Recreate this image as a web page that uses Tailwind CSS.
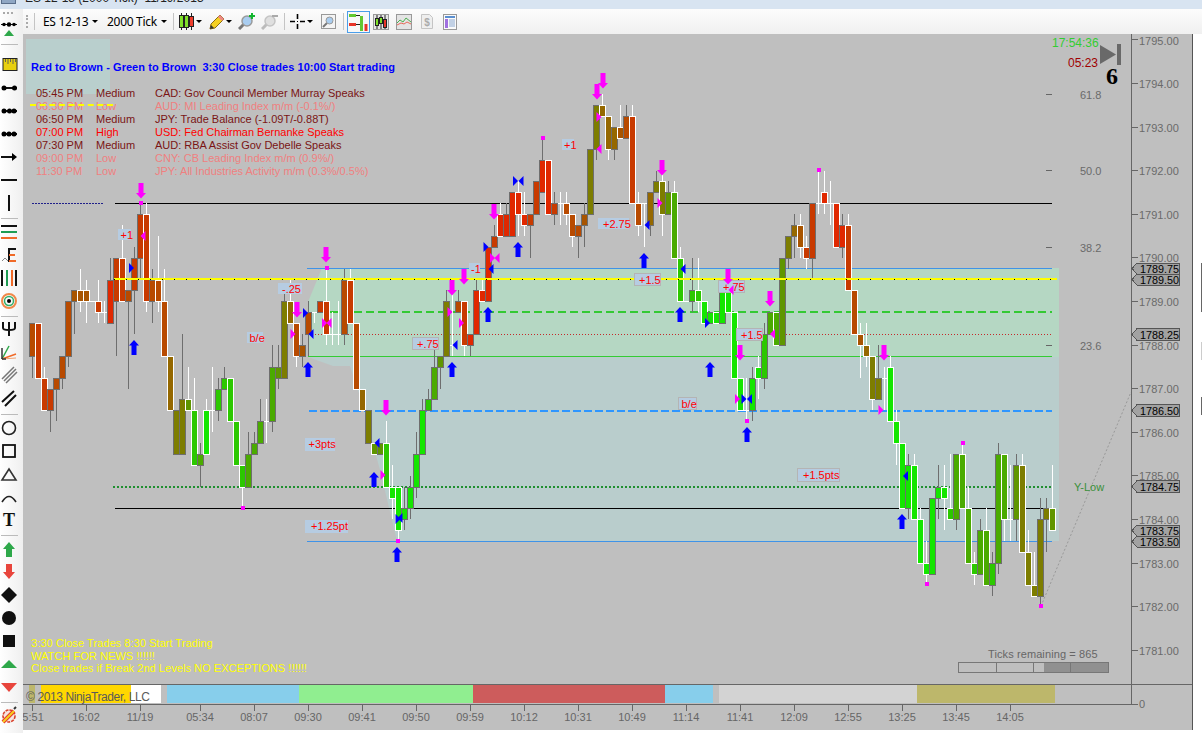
<!DOCTYPE html>
<html lang="en">
<head>
    <meta charset="UTF-8">
    <title>ES 12-13 (2000 Tick) 11/19/2013</title>
    <script src="https://cdn.jsdelivr.net/npm/@tailwindcss/browser@4"></script>
</head>
<body class="w-[1202px] h-[733px] overflow-hidden bg-white font-['Liberation_Sans',Arial,sans-serif]">
    <!-- title bar, only the bottom edge shows -->
    <div class="h-[9px] overflow-hidden bg-[#d8e4f1] flex items-end pl-[1px]">
        <div class="w-[15px] h-[6px] bg-[#8fa7c4] border border-[#5a6f8c] mb-[5px]"></div>
        <div class="ml-[9px] text-[12px] leading-[16px] mb-[3px] text-[#222] whitespace-pre">ES 12-13 (2000 Tick)  11/19/2013</div>
    </div>

    <div class="flex h-[724px]">
        <!-- left drawing tools -->
        <div class="w-[23px] h-full bg-linear-to-r from-[#ffffff] to-[#efefef] shrink-0">
            <svg width="23" height="724" viewBox="0 9 23 724">
                <g fill="#aaa"><rect x="3" y="12" width="2" height="2"/><rect x="7" y="12" width="2" height="2"/><rect x="11" y="12" width="2" height="2"/></g>
                <path d="M1 24.5h16" stroke="#111"/><circle cx="4" cy="24.5" r="1.8"/><circle cx="9" cy="24.5" r="2.2"/><circle cx="14" cy="24.5" r="1.8"/>
                <path d="M4 36l5-6 5 6z" fill="#2ea84a"/>
                <path d="M1 44.5h17" stroke="#bbb"/>
                <rect x="3" y="58.5" width="14" height="12" fill="#e8d010" stroke="#222"/>
                <path d="M5.5 59v3M8 59v5M10.5 59v3M13 59v5M15.5 59v3" stroke="#665"/>
                <path d="M2 88h15" stroke="#111" stroke-width="2"/><circle cx="4" cy="88" r="2.5"/><circle cx="14.5" cy="88" r="2.5"/>
                <path d="M2 111h15" stroke="#111" stroke-width="2"/><circle cx="4" cy="111" r="2.5"/><circle cx="9.5" cy="111" r="2.5"/><circle cx="14" cy="111" r="2.5"/>
                <path d="M2 134h15" stroke="#111" stroke-width="2"/><circle cx="4" cy="134" r="2.5"/><circle cx="9" cy="134" r="2.5"/><circle cx="14" cy="134" r="2.5"/>
                <path d="M1 157h14" stroke="#111" stroke-width="2"/><path d="M12 153l5 4-5 4z"/>
                <path d="M1 180h16" stroke="#111" stroke-width="2"/>
                <path d="M9 195v16" stroke="#111" stroke-width="2"/>
                <path d="M1 218.5h17" stroke="#bbb"/>
                <path d="M1 226h16" stroke="#111" stroke-width="2"/><path d="M1 232h16" stroke="#1f9d55" stroke-width="2"/><path d="M1 238h16" stroke="#f06a28" stroke-width="2"/>
                <path d="M2 261l3-3 3 3" fill="none" stroke="#888"/><path d="M9 248v14" stroke="#111" stroke-width="2"/><path d="M9 249h7M9 255h6M9 261h7" stroke="#f06a28" stroke-width="2"/><path d="M9 249h7" stroke="#111" stroke-width="2"/>
                <path d="M2 270v16M7 270v16M12 270v16M16 270v16" stroke="#111" stroke-width="2"/><path d="M7 270v16" stroke="#1f9d55" stroke-width="2"/><path d="M12 270v16" stroke="#f06a28" stroke-width="2"/>
                <circle cx="9" cy="301" r="7" fill="none" stroke="#f0894a" stroke-width="2"/><circle cx="9" cy="301" r="4.5" fill="none" stroke="#32b06c" stroke-width="1.5"/><circle cx="9" cy="301" r="2"/>
                <path d="M1 316.5h17" stroke="#bbb"/>
                <path d="M3 322v6q0 2 6 2t6-2v-6M9 322v14" fill="none" stroke="#111" stroke-width="2"/>
                <path d="M2 359L9 346" stroke="#2ea84a" stroke-width="1.5"/><path d="M2 359l14-5" stroke="#f06a28" stroke-width="1.5"/><path d="M2 359l14-1" stroke="#f0a070" stroke-width="1"/><path d="M2 359v-11" stroke="#333" stroke-width="1.5"/><path d="M2 359h4" stroke="#333" stroke-width="1.5"/>
                <path d="M2 379l12-12M4 381l12-12M6 383l11-11" stroke="#777" stroke-width="1.5"/>
                <path d="M2 402l12-11M5 406l11-11" stroke="#111" stroke-width="2"/>
                <path d="M1 414.5h17" stroke="#bbb"/>
                <circle cx="9" cy="428" r="6.5" fill="none" stroke="#222" stroke-width="1.6"/>
                <rect x="3" y="445" width="12" height="12" fill="none" stroke="#111" stroke-width="1.8"/>
                <path d="M2 480l7-11 7 11z" fill="none" stroke="#333" stroke-width="1.6"/>
                <path d="M2 502q7-11 14 0" fill="none" stroke="#222" stroke-width="1.6"/>
                <text x="9" y="526" text-anchor="middle" class="font-['Liberation_Serif',serif] font-bold text-[18px]" fill="#111">T</text>
                <path d="M1 535.5h17" stroke="#bbb"/>
                <path d="M9 542l6 7h-3v8H6v-8H3z" fill="#2ea84a"/>
                <path d="M6 564h6v8h3l-6 7-6-7h3z" fill="#e8453c"/>
                <path d="M9 587l8 8-8 8-8-8z" fill="#111"/>
                <circle cx="9" cy="618" r="7" fill="#111"/>
                <rect x="3" y="635" width="12" height="12" fill="#111"/>
                <path d="M1 668l8-8 8 8z" fill="#2ea84a"/>
                <path d="M1 683h16l-8 9z" fill="#e8453c"/>
                <path d="M1 702.5h17" stroke="#bbb"/>
                <circle cx="9" cy="716" r="6" fill="#f6e6e0" stroke="#d8412c" stroke-width="1.6" stroke-dasharray="3 1"/><path d="M3 722L14 711" stroke="#e8352a" stroke-width="4"/><path d="M3 722L14 711" stroke="#f5d020" stroke-width="2.200"/><path d="M14 709l2-2" stroke="#333" stroke-width="2"/>
            </svg>
        </div>

        <div class="w-[1179px] flex flex-col">
            <!-- chart toolbar -->
            <div class="h-[25px] flex items-center pl-[3px] bg-linear-to-b from-[#fcfcfc] to-[#f0f0f0]">
                <div class="w-[2px] h-[13px] border-l-2 border-dotted border-[#aaa]"></div>
                <div class="w-px h-[17px] ml-[6px] bg-[#c4c4c4]"></div>
                <span class="ml-[8px] w-[47px] text-[12px] tracking-[-0.3px] text-black font-['Noto_Sans',sans-serif] whitespace-pre">ES 12-13</span>
                <svg class="ml-[2px]" width="6" height="3"><path d="M0 0h6l-3 3z"/></svg>
                <span class="ml-[9px] w-[53px] text-[12px] tracking-[-0.3px] text-black font-['Noto_Sans',sans-serif] whitespace-pre">2000 Tick</span>
                <svg class="ml-[1px]" width="6" height="3"><path d="M0 0h6l-3 3z"/></svg>
                <div class="w-px h-[17px] ml-[6px] bg-[#c4c4c4]"></div>
                <svg class="ml-[5px]" width="15" height="17" viewBox="0 0 15 17"><path d="M2.5 0v17M7.5 0v17M12.5 0v17" stroke="#222"/><rect x="0.5" y="2.5" width="4" height="12" fill="#7fe02a" stroke="#222"/><rect x="5.5" y="2.5" width="4" height="12" fill="#7fe02a" stroke="#222"/><rect x="10.5" y="3.5" width="4" height="10" fill="#ee3d2c" stroke="#222"/></svg>
                <svg class="ml-[2px]" width="6" height="3"><path d="M0 0h6l-3 3z"/></svg>
                <svg class="ml-[7px]" width="16" height="16" viewBox="0 0 16 16"><path d="M1 15l1-5L11 1l4 4-9 9z" fill="#f5d020" stroke="#8a6d10"/><path d="M1 15l1-4 3 3z" fill="#333"/><path d="M11 1l4 4-2 2-4-4z" fill="#e88"/></svg>
                <svg class="ml-[1px]" width="6" height="3"><path d="M0 0h6l-3 3z"/></svg>
                <svg class="ml-[6px]" width="18" height="17" viewBox="0 0 18 17"><path d="M6 11l-5 5" stroke="#777" stroke-width="3"/><circle cx="9" cy="8" r="5" fill="#a9cdf0" stroke="#9a9a9a" stroke-width="1.5"/><path d="M14 0v6M11 3h6" stroke="#11b52e" stroke-width="2"/></svg>
                <svg class="ml-[5px]" width="17" height="17" viewBox="0 0 17 17"><path d="M6 11l-5 5" stroke="#bbb" stroke-width="3"/><circle cx="9" cy="8" r="5" fill="#dfdfdf" stroke="#c4c4c4" stroke-width="1.5"/><path d="M11 3h6" stroke="#aaa" stroke-width="2"/></svg>
                <div class="w-px h-[17px] ml-[6px] bg-[#c4c4c4]"></div>
                <svg class="ml-[5px]" width="15" height="15" viewBox="0 0 15 15"><path d="M0 7.5h5M10 7.5h5M7.5 0v5M7.5 10v5" stroke="#000" stroke-width="1.6"/><rect x="7" y="7" width="1" height="1"/></svg>
                <svg class="ml-[2px]" width="6" height="3"><path d="M0 0h6l-3 3z"/></svg>
                <svg class="ml-[8px]" width="15" height="15" viewBox="0 0 15 15"><rect x="0.5" y="0.5" width="14" height="14" fill="#f4f4f4" stroke="#999"/><path d="M6 9l-4 4" stroke="#777" stroke-width="2"/><circle cx="8.5" cy="6.5" r="3.5" fill="#a9cdf0" stroke="#999"/></svg>
                <div class="w-px h-[17px] ml-[7px] bg-[#c4c4c4]"></div>
                <div class="ml-[3px] w-[23px] h-[22px] border border-[#4a9eea] bg-[#f8f8f8] flex items-center justify-center">
                    <svg width="19" height="18" viewBox="0 0 19 18"><rect x="0" y="1" width="7" height="3" fill="#63c832"/><path d="M7 2.5h4" stroke="#222"/><rect x="0" y="10" width="7" height="3" fill="#e8352a"/><path d="M7 11.5h4" stroke="#222"/><path d="M12.5 3v15" stroke="#63c832" stroke-width="3"/><path d="M17 11v7" stroke="#e8352a" stroke-width="3"/></svg>
                </div>
                <svg class="ml-[3px]" width="16" height="16" viewBox="0 0 16 16"><rect x="0.5" y="0.5" width="15" height="15" fill="#e4e4e4" stroke="#999"/><path d="M4 1v14M8 1v14M12 1v14" stroke="#222"/><rect x="2.5" y="4.5" width="3" height="7" fill="#7fe02a" stroke="#222"/><rect x="6.5" y="3.5" width="3" height="6" fill="#7fe02a" stroke="#222"/><rect x="10.5" y="5.5" width="3" height="8" fill="#e8352a" stroke="#222"/></svg>
                <svg class="ml-[7px]" width="16" height="16" viewBox="0 0 16 16"><rect x="0.5" y="0.5" width="15" height="15" fill="#e4e4e4" stroke="#999"/><path d="M1 9l3-3 3 2 3-4 5 4" fill="none" stroke="#4caf50"/><path d="M1 11l4-2 3 1 3-2 4 2" fill="none" stroke="#e86a5a"/></svg>
                <svg class="ml-[9px]" width="12" height="15" viewBox="0 0 12 15"><path d="M0.5 0.5h8l3 3v11h-11z" fill="#eee" stroke="#c4c4c4"/><text x="6" y="11.5" text-anchor="middle" fill="#aaa" class="text-[10px] font-bold">$</text></svg>
                <svg class="ml-[10px]" width="14" height="16" viewBox="0 0 14 16"><rect x="0.5" y="0.5" width="13" height="15" fill="#fafafa" stroke="#999"/><rect x="2" y="2" width="10" height="2" fill="#5a8fd0"/><rect x="2" y="5" width="3" height="9" fill="#a070e0"/><path d="M6 6h6M6 8h6M6 10h6M6 12h6" stroke="#8aa8d0"/></svg>
            </div>

            <div class="flex h-[699px]">
                <!-- chart -->
                <div class="relative w-[1169px] h-[696px] bg-[#bfbfbf] overflow-hidden">
                    <svg class="absolute inset-0" width="1169" height="696" viewBox="23 34 1169 696">
                        <rect x="26" y="39" width="84" height="55" fill="#b9cfcd"/>
                        <path d="M322 268L308 302V357H1059V268Z" fill="#b5d7c3"/>
                        <path d="M308 357L333 366H350L358 390L380 470L397 541H1059V357Z" fill="#b9cdcc"/>

                        <g shape-rendering="crispEdges">
                            <path d="M32 203.5h72" stroke="#20208a" stroke-dasharray="2 1"/>
                            <path d="M115 203.5h937M115 508.5h937" stroke="#000"/>
                            <path d="M307 268.5h745M307 541.5h745" stroke="#3f93e8"/>
                            <path d="M330 312h722" stroke="#33c933" stroke-width="2" stroke-dasharray="8 4"/>
                            <path d="M315 334.5h737" stroke="#c42a2a" stroke-dasharray="1 2"/>
                            <path d="M308 356.5h744" stroke="#33cc33"/>
                            <path d="M309 410.5h743" stroke="#2e96ff" stroke-width="2" stroke-dasharray="8 3"/>
                            <path d="M113 486.5h939" stroke="#1f8f2f" stroke-width="2" stroke-dasharray="2 2"/>
                            <path d="M1046 94.5h6M1046 170.5h6M1046 247.5h6M1046 345.5h6" stroke="#666"/>
                        </g>
                        <path d="M1041 606L1131 392" stroke="#999" stroke-dasharray="2 2" fill="none"/>

                        <g id="candles" shape-rendering="crispEdges"></g>

                        <g shape-rendering="crispEdges">
                            <path d="M114 279h943" stroke="#ffff00" stroke-width="2"/>
                            <path d="M114 279.500h943" stroke="#000" stroke-dasharray="1 11"/>
                        </g>

                        <!-- trade notes -->
                        <g class="text-[11px]" fill="#ff0000">
                            <rect x="118" y="229" width="13" height="11" fill="#b6cce2"/><text x="120.5" y="239">+1</text>
                            <rect x="278" y="283" width="24" height="11" fill="#b6cce2"/><text x="282" y="293">-.25</text>
                            <rect x="247" y="332" width="16" height="11" fill="#b6cce2"/><text x="249.5" y="342">b/e</text>
                            <rect x="305" y="438" width="30" height="13" fill="#b6cce2"/><text x="308.5" y="448">+3pts</text>
                            <rect x="305" y="520" width="43" height="13" fill="#b6cce2"/><text x="311" y="530">+1.25pt</text>
                            <rect x="412.5" y="337.5" width="26" height="12" fill="#b6cce2" stroke="#b4b4b4"/><text x="417" y="347.5">+.75</text>
                            <rect x="562" y="139" width="12" height="11" fill="#b6cce2"/><text x="564" y="149">+1</text>
                            <rect x="598" y="218" width="31" height="11" fill="#b6cce2"/><text x="603" y="228">+2.75</text>
                            <rect x="469" y="263" width="11" height="11" fill="#b6cce2"/><text x="471" y="273">-1</text>
                            <rect x="634.5" y="273.5" width="26" height="12" fill="#b6cce2" stroke="#b4b4b4"/><text x="639" y="284">+1.5</text>
                            <rect x="718.5" y="280.5" width="26" height="12" fill="#b6cce2" stroke="#b4b4b4"/><text x="723" y="290.5">+.75</text>
                            <rect x="736.5" y="328.5" width="26" height="12" fill="#b6cce2" stroke="#b4b4b4"/><text x="741" y="338.5">+1.5</text>
                            <rect x="678.5" y="397.5" width="18" height="12" fill="#b6cce2" stroke="#b4b4b4"/><text x="681.5" y="407.5">b/e</text>
                            <rect x="797.5" y="468.5" width="42" height="13" fill="#b6cce2" stroke="#b4b4b4"/><text x="803" y="479">+1.5pts</text>
                        </g>

                        <g id="marks"></g>

                        <!-- session colours strip -->
                        <g shape-rendering="crispEdges">
                            <rect x="29" y="685" width="6" height="18" fill="#bdb76b"/>
                            <rect x="41" y="685" width="90" height="18" fill="#ffd700"/>
                            <rect x="131" y="685" width="30" height="18" fill="#ffffff"/>
                            <rect x="167" y="685" width="132" height="18" fill="#87ceeb"/>
                            <rect x="299" y="685" width="174" height="18" fill="#90ee90"/>
                            <rect x="473" y="685" width="192" height="18" fill="#cd5c5c"/>
                            <rect x="665" y="685" width="48" height="18" fill="#87ceeb"/>
                            <rect x="719" y="685" width="198" height="18" fill="#d3d3d3"/>
                            <rect x="917" y="685" width="138" height="18" fill="#bdb76b"/>
                            <path d="M23 684.5h1169M23 704.5h1108M1131 34v670M1131 704.5h7" stroke="#666"/>
                            <path d="M1131 39.5h7M1131 83.5h7M1131 127.5h7M1131 170.5h7M1131 214.5h7M1131 257.5h7M1131 301.5h7M1131 345.5h7M1131 388.5h7M1131 432.5h7M1131 475.5h7M1131 519.5h7M1131 563.5h7M1131 606.5h7M1131 650.5h7" stroke="#666"/>
                            <path d="M32.5 704v7M86.5 704v7M140.5 704v7M200.5 704v7M254.5 704v7M308.5 704v7M362.5 704v7M416.5 704v7M470.5 704v7M524.5 704v7M578.5 704v7M632.5 704v7M686.5 704v7M740.5 704v7M794.5 704v7M848.5 704v7M902.5 704v7M956.5 704v7M1010.5 704v7" stroke="#666"/>
                        </g>
                        <text x="26" y="701" class="text-[12px]" fill="#5a5a5a" textLength="124">© 2013 NinjaTrader, LLC</text>

                        <!-- time axis -->
                        <g class="text-[11px]" fill="#666" text-anchor="middle">
                            <text x="30" y="721">05:51</text><text x="86" y="721">16:02</text><text x="140" y="721">11/19</text><text x="200" y="721">05:34</text><text x="254" y="721">08:07</text><text x="308" y="721">09:30</text><text x="362" y="721">09:41</text><text x="416" y="721">09:50</text><text x="470" y="721">09:59</text><text x="524" y="721">10:12</text><text x="578" y="721">10:31</text><text x="632" y="721">10:49</text><text x="686" y="721">11:14</text><text x="740" y="721">11:41</text><text x="794" y="721">12:09</text><text x="848" y="721">12:55</text><text x="902" y="721">13:25</text><text x="956" y="721">13:45</text><text x="1010" y="721">14:05</text>
                        </g>

                        <!-- price axis -->
                        <g class="text-[11px]" fill="#6a6a6a">
                            <text x="1139" y="45">1795.00</text><text x="1139" y="88">1794.00</text><text x="1139" y="132">1793.00</text><text x="1139" y="175">1792.00</text><text x="1139" y="219">1791.00</text><text x="1139" y="262">1790.00</text><text x="1139" y="306">1789.00</text><text x="1139" y="350">1788.00</text><text x="1139" y="393">1787.00</text><text x="1139" y="437">1786.00</text><text x="1139" y="480">1785.00</text><text x="1139" y="524">1784.00</text><text x="1139" y="568">1783.00</text><text x="1139" y="611">1782.00</text><text x="1139" y="655">1781.00</text><text x="1139" y="708">0</text>
                            <text x="1080" y="99">61.8</text><text x="1080" y="175">50.0</text><text x="1080" y="252">38.2</text><text x="1080" y="350">23.6</text>
                        </g>
                        <g fill="#a2a2a2" stroke="#555" shape-rendering="crispEdges">
                            <path d="M1132 268.5l5-5.5h42v11h-42z"/><path d="M1132 279.5l5-5.5h42v11h-42z"/><path d="M1132 334.5l5-6h42v12h-42z"/><path d="M1132 410.5l5-6h42v12h-42z"/><path d="M1132 486.5l5-6h42v12h-42z"/><path d="M1132 530.5l5-5.5h42v11h-42z"/><path d="M1132 541.5l5-5.5h42v11h-42z"/>
                        </g>
                        <g class="text-[10.8px]" fill="#000">
                            <text x="1140" y="272.5">1789.75</text><text x="1140" y="283.5">1789.50</text><text x="1140" y="338.5">1788.25</text><text x="1140" y="414.5">1786.50</text><text x="1140" y="490.5">1784.75</text><text x="1140" y="534.5">1783.75</text><text x="1140" y="545.5">1783.50</text>
                        </g>

                        <!-- clock and bar timer, top right -->
                        <text x="1052" y="47" class="text-[12px]" fill="#32cd32">17:54:36</text>
                        <text x="1068" y="67" class="text-[12px]" fill="#a00000">05:23</text>
                        <path d="M1100 45v19l16-9.500z" fill="#696969"/><rect x="1117" y="44" width="4" height="21" fill="#696969"/>
                        <text x="1106" y="84" class="text-[24px] font-bold font-['Liberation_Serif',serif]" fill="#000">6</text>
                        <text x="1074" y="491" class="text-[11px]" fill="#3a8f3a">Y-Low</text>

                        <!-- ticks remaining -->
                        <text x="988" y="658" class="text-[11px] tracking-[0.1px]" fill="#666">Ticks remaining = 865</text>
                        <g shape-rendering="crispEdges">
                            <rect x="1044" y="662" width="64" height="10" fill="#909090"/>
                            <rect x="958.500" y="662.500" width="150" height="10" fill="none" stroke="#777"/>
                            <path d="M996.500 662v10M1033.500 662v10M1070.500 662v10" stroke="#777"/>
                        </g>
                    </svg>

                    <!-- headline and news list -->
                    <div class="absolute left-[8px] top-[25px] text-[11px] tracking-[0.05px] font-bold text-[#0000ff] whitespace-pre">Red to Brown - Green to Brown  3:30 Close trades 10:00 Start trading</div>
                    <div class="absolute left-[13px] top-[53px] grid grid-cols-[60px_59px_auto] auto-rows-[13px] text-[11px] leading-[13px] whitespace-pre">
                        <span class="text-[#7a1414]">05:45 PM</span><span class="text-[#7a1414]">Medium</span><span class="text-[#7a1414]">CAD: Gov Council Member Murray Speaks</span>
                        <span class="text-[#f08080]">06:30 PM</span><span class="text-[#f08080]">Low</span><span class="text-[#f08080]">AUD: MI Leading Index m/m (-0.1%/)</span>
                        <span class="text-[#7a1414]">06:50 PM</span><span class="text-[#7a1414]">Medium</span><span class="text-[#7a1414]">JPY: Trade Balance (-1.09T/-0.88T)</span>
                        <span class="text-[#ff0000]">07:00 PM</span><span class="text-[#ff0000]">High</span><span class="text-[#ff0000]">USD: Fed Chairman Bernanke Speaks</span>
                        <span class="text-[#7a1414]">07:30 PM</span><span class="text-[#7a1414]">Medium</span><span class="text-[#7a1414]">AUD: RBA Assist Gov Debelle Speaks</span>
                        <span class="text-[#f08080]">09:00 PM</span><span class="text-[#f08080]">Low</span><span class="text-[#f08080]">CNY: CB Leading Index m/m (0.9%/)</span>
                        <span class="text-[#f08080]">11:30 PM</span><span class="text-[#f08080]">Low</span><span class="text-[#f08080]">JPY: All Industries Activity m/m (0.3%/0.5%)</span>
                    </div>
                    <div class="absolute left-[7px] top-[70px] w-[83px] border-t-2 border-dashed border-[#ffff00]"></div>

                    <!-- reminders -->
                    <div class="absolute left-[8px] top-[603px] text-[11px] tracking-[0.05px] leading-[12.500px] text-[#ffff00] whitespace-pre">3:30 Close Trades 8:30 Start Trading
WATCH FOR NEWS !!!!!!
Close trades if Break 2nd Levels NO EXCEPTIONS !!!!!!</div>
                </div>
                <div class="w-[10px] h-[696px] bg-white border-l border-[#555] flex justify-end">
                    <svg width="1" height="696" viewBox="0 34 1 696"><path d="M0.5 263V312M0.5 397V415" stroke="#666"/><path d="M0.5 342V360" stroke="#ccc"/></svg>
                </div>
            </div>
        </div>
    </div>

    <script>
        // [g = grey outline / w = white outline, body top, body bottom, wick top, wick bottom, colour]
        // prices are counted in ticks below 1795.00, 0 = no wick
        const colors = { o: '#b84a00', d: '#a85400', a: '#c83a00', r: '#e02800', b: '#956800', l: '#7d7d00', y: '#5f9600', g: '#4aab00', h: '#2cc800', n: '#14e600' };
        const bars = [
            ['g',26,29,0,31,'o'],['w',26,31,0,0,'a'],['w',31,34,30,0,'a'],['g',32,34,0,36,'a'],['g',31,32,0,35,'o'],
            ['g',29,31,0,32,'o'],['g',24,29,0,30,'o'],['g',23,24,0,27,'d'],['w',23,24,21,25,'d'],['w',23,24,22,26,'d'],
            ['w',24,24,0,0,'o'],['w',24,25,22,26,'a'],['w',25,25,24,26,'a'],['g',22,26,20,0,'r'],['g',20,24,0,29,'a'],
            ['w',20,24,17,0,'a'],['g',23,24,0,32,'o'],['g',20,23,19,27,'a'],['g',16,20,15,22,'a'],['w',16,24,15,25,'a'],
            ['g',22,24,21,26,'o'],['w',22,24,18,25,'o'],['w',24,29,21,0,'o'],['w',29,34,0,0,'b'],['g',34,38,0,0,'l'],
            ['g',33,38,27,0,'l'],['w',33,34,30,0,'y'],['w',34,39,31,0,'h'],['g',38,39,37,41,'g'],['w',34,38,33,0,'n'],
            ['w',34,34,30,36,'h'],['g',32,34,31,35,'h'],['g',31,32,30,0,'h'],['w',31,35,0,0,'h'],['w',35,39,0,0,'h'],
            ['w',39,41,0,43,'h'],['g',38,41,36,0,'g'],['g',37,38,36,0,'g'],['g',35,37,33,0,'g'],['w',35,35,33,37,'g'],
            ['g',30,35,28,36,'g'],['g',30,31,28,32,'y'],['g',24,31,23,0,'l'],['w',24,26,22,0,'b'],['w',26,29,0,30,'o'],
            ['g',28,29,27,30,'d'],['g',25,27,24,29,'o'],['w',25,25,25,26,'o'],['g',24,25,0,0,'a'],['w',24,27,21,28,'a'],
            ['w',27,27,25,28,'a'],['w',27,27,24,28,'a'],['g',22,27,21,28,'o'],['w',22,26,21,0,'a'],['w',26,32,0,0,'o'],
            ['w',32,34,0,0,'b'],['g',34,37,0,0,'l'],['w',37,38,0,0,'y'],['g',37,38,0,0,'y'],['w',37,41,35,0,'h'],
            ['w',41,42,39,44,'n'],['w',41,45,0,46,'n'],['g',43,44,41,45,'n'],['g',41,43,40,44,'n'],['g',38,41,36,42,'n'],
            ['g',34,38,33,0,'n'],['g',33,34,32,0,'h'],['g',30,33,28,0,'g'],['g',29,30,0,32,'y'],['g',24,29,23,0,'l'],
            ['w',28,28,23,29,'l'],['g',24,25,23,0,'o'],['w',24,28,0,29,'a'],['g',27,28,0,29,'r'],['g',23,27,22,0,'r'],
            ['w',23,24,22,0,'r'],['g',19,24,0,0,'r'],['g',18,19,17,0,'a'],['w',16,18,15,0,'r'],['g',16,18,15,0,'r'],
            ['g',14,18,0,0,'r'],['w',14,16,13,18,'r'],['w',16,17,14,18,'r'],['g',16,17,0,20,'a'],['g',13,16,0,0,'a'],
            ['g',11,14,9,0,'r'],['w',11,16,0,0,'r'],['g',15,16,14,17,'a'],['w',15,15,14,17,'o'],['w',15,16,14,17,'o'],
            ['w',16,18,0,19,'o'],['g',17,18,0,20,'o'],['g',16,17,15,19,'d'],['g',10,16,0,0,'l'],['g',6,10,0,11,'l'],
            ['w',6,7,5,0,'b'],['w',7,10,0,11,'b'],['g',8,10,0,11,'b'],['w',8,9,6,0,'d'],['g',7,9,6,0,'o'],
            ['w',7,15,6,0,'a'],['w',15,17,14,18,'o'],['w',15,15,15,19,'o'],['g',14,17,0,18,'b'],['g',13,14,12,0,'l'],
            ['w',13,16,12,18,'l'],['g',14,16,13,0,'y'],['w',14,20,13,0,'g'],['w',20,24,19,0,'h'],['w',24,24,0,0,'h'],
            ['g',23,24,20,25,'h'],['w',23,24,20,25,'h'],['w',24,26,0,0,'n'],['g',25,26,0,0,'n'],['w',25,26,0,0,'n'],
            ['g',23,26,0,0,'n'],['w',23,25,0,0,'n'],['w',25,31,0,0,'n'],['w',31,34,0,0,'n'],['w',34,34,31,35,'n'],
            ['g',31,34,30,35,'n'],['w',30,31,29,33,'n'],['g',27,31,26,32,'h'],['g',25,27,0,0,'g'],['w',25,28,0,0,'g'],
            ['g',20,28,0,0,'y'],['g',18,20,0,21,'l'],['g',17,18,16,20,'b'],['w',17,19,16,20,'d'],['w',19,20,18,21,'a'],
            ['g',15,20,0,22,'a'],['w',15,15,12,16,'r'],['w',14,15,12,16,'r'],['w',15,15,13,17,'r'],['w',15,19,0,0,'r'],
            ['g',17,19,16,20,'r'],['w',17,23,16,0,'a'],['w',23,27,0,0,'o'],['w',27,28,26,31,'d'],['w',28,29,26,30,'b'],
            ['w',29,33,0,34,'l'],['g',31,33,28,0,'l'],['w',31,31,30,34,'y'],['w',30,35,29,0,'n'],['w',35,37,34,39,'n'],
            ['w',37,43,0,0,'n'],['g',39,43,38,44,'n'],['w',39,44,38,0,'n'],['w',44,48,43,0,'n'],['w',48,49,46,50,'n'],
            ['g',42,49,0,0,'n'],['g',41,42,39,44,'n'],['w',41,42,39,45,'n'],['w',43,44,38,0,'h'],['g',38,44,0,45,'g'],
            ['w',38,43,37,0,'g'],['w',43,48,41,0,'g'],['w',48,49,47,50,'h'],['g',45,49,44,0,'g'],['w',45,50,43,0,'g'],
            ['g',48,50,47,51,'h'],['g',38,48,37,49,'g'],['w',38,44,0,46,'g'],['w',44,44,39,46,'g'],['g',39,44,38,46,'y'],
            ['w',39,47,38,0,'l'],['w',47,50,45,0,'l'],['w',50,51,47,0,'l'],['g',44,51,42,52,'l'],['g',43,44,42,47,'l'],
            ['w',43,45,39,0,'y']
        ];
        const tickY = t => Math.round(39.7 + t * 10.9);
        let wicks = '', bodies = '';
        bars.forEach((b, i) => {
            const line = b[0] === 'g' ? '#6e6e6e' : '#ffffff';
            const cx = 32.5 + 6 * i;
            const top = tickY(b[1]), bot = tickY(b[2]);
            const wt = b[3] ? tickY(b[3]) : top, wb = b[4] ? tickY(b[4]) : bot;
            if (wt !== wb) wicks += `<path d="M${cx} ${wt}V${wb}" stroke="${line}"/>`;
            if (top === bot) {
                bodies += `<path d="M${cx - 3} ${top + 0.5}h6" stroke="${line}"/>`;
            } else {
                bodies += `<rect x="${cx - 3}" y="${top + 0.5}" width="6" height="${bot - top}" fill="${colors[b[5]]}" stroke="${line}" stroke-width="1.2"/>`;
            }
        });
        document.getElementById('candles').innerHTML = wicks + bodies;

        // arrows, small triangles and the swing squares
        const pink = '#ff00ff', blue = '#0000ff';
        const down = [[141,183],[326,247],[297,302],[386,400],[603,73],[597,84],[494,204],[464,269],[452,280],[662,160],[728,269],[770,291],[740,345],[884,345]];
        const up = [[134,340],[308,362],[374,472],[397,547],[518,242],[644,253],[488,307],[680,307],[452,362],[710,362],[747,427],[902,514]];
        const rightBlue = [[131.5,268],[305.5,313],[486,247],[515.5,181],[707.5,323],[744,399],[398,519]];
        const leftBlue = [[311,334],[400,518],[491,269],[521,181],[647,225],[683,269],[455,345],[749.5,399],[905.5,476],[377,443]];
        const rightPink = [[293,334],[324.5,323],[383,475],[450,312],[461.5,323],[492.5,258],[599,117],[660,203],[737.5,399],[881,410]];
        const leftPink = [[143,236],[329,323],[497,258],[599,149],[731,290],[772.5,334]];
        const squares = [[141,203],[327,268],[398,541],[543,138],[819,170],[747,421],[963,443],[927,584],[1041,606],[243,508]];
        let marks = '';
        down.forEach(([x, y]) => { marks += `<path d="M${x - 2.5} ${y}h5v10h2.500l-5 5.500-5-5.500h2.500z" fill="${pink}"/>`; });
        up.forEach(([x, y]) => { marks += `<path d="M${x} ${y}l5 5.500h-2.500v9.500h-5v-9.500h-2.500z" fill="${blue}"/>`; });
        rightBlue.forEach(([x, y]) => { marks += `<path d="M${x - 2.5} ${y - 5}l5 5-5 5z" fill="${blue}"/>`; });
        leftBlue.forEach(([x, y]) => { marks += `<path d="M${x + 2.5} ${y - 5}l-5 5 5 5z" fill="${blue}"/>`; });
        rightPink.forEach(([x, y]) => { marks += `<path d="M${x - 2.5} ${y - 5}l5 5-5 5z" fill="${pink}"/>`; });
        leftPink.forEach(([x, y]) => { marks += `<path d="M${x + 2.5} ${y - 5}l-5 5 5 5z" fill="${pink}"/>`; });
        squares.forEach(([x, y]) => { marks += `<rect x="${x - 2}" y="${y - 2}" width="4" height="4" fill="${pink}"/>`; });
        document.getElementById('marks').innerHTML = marks;
    </script>
</body>
</html>
